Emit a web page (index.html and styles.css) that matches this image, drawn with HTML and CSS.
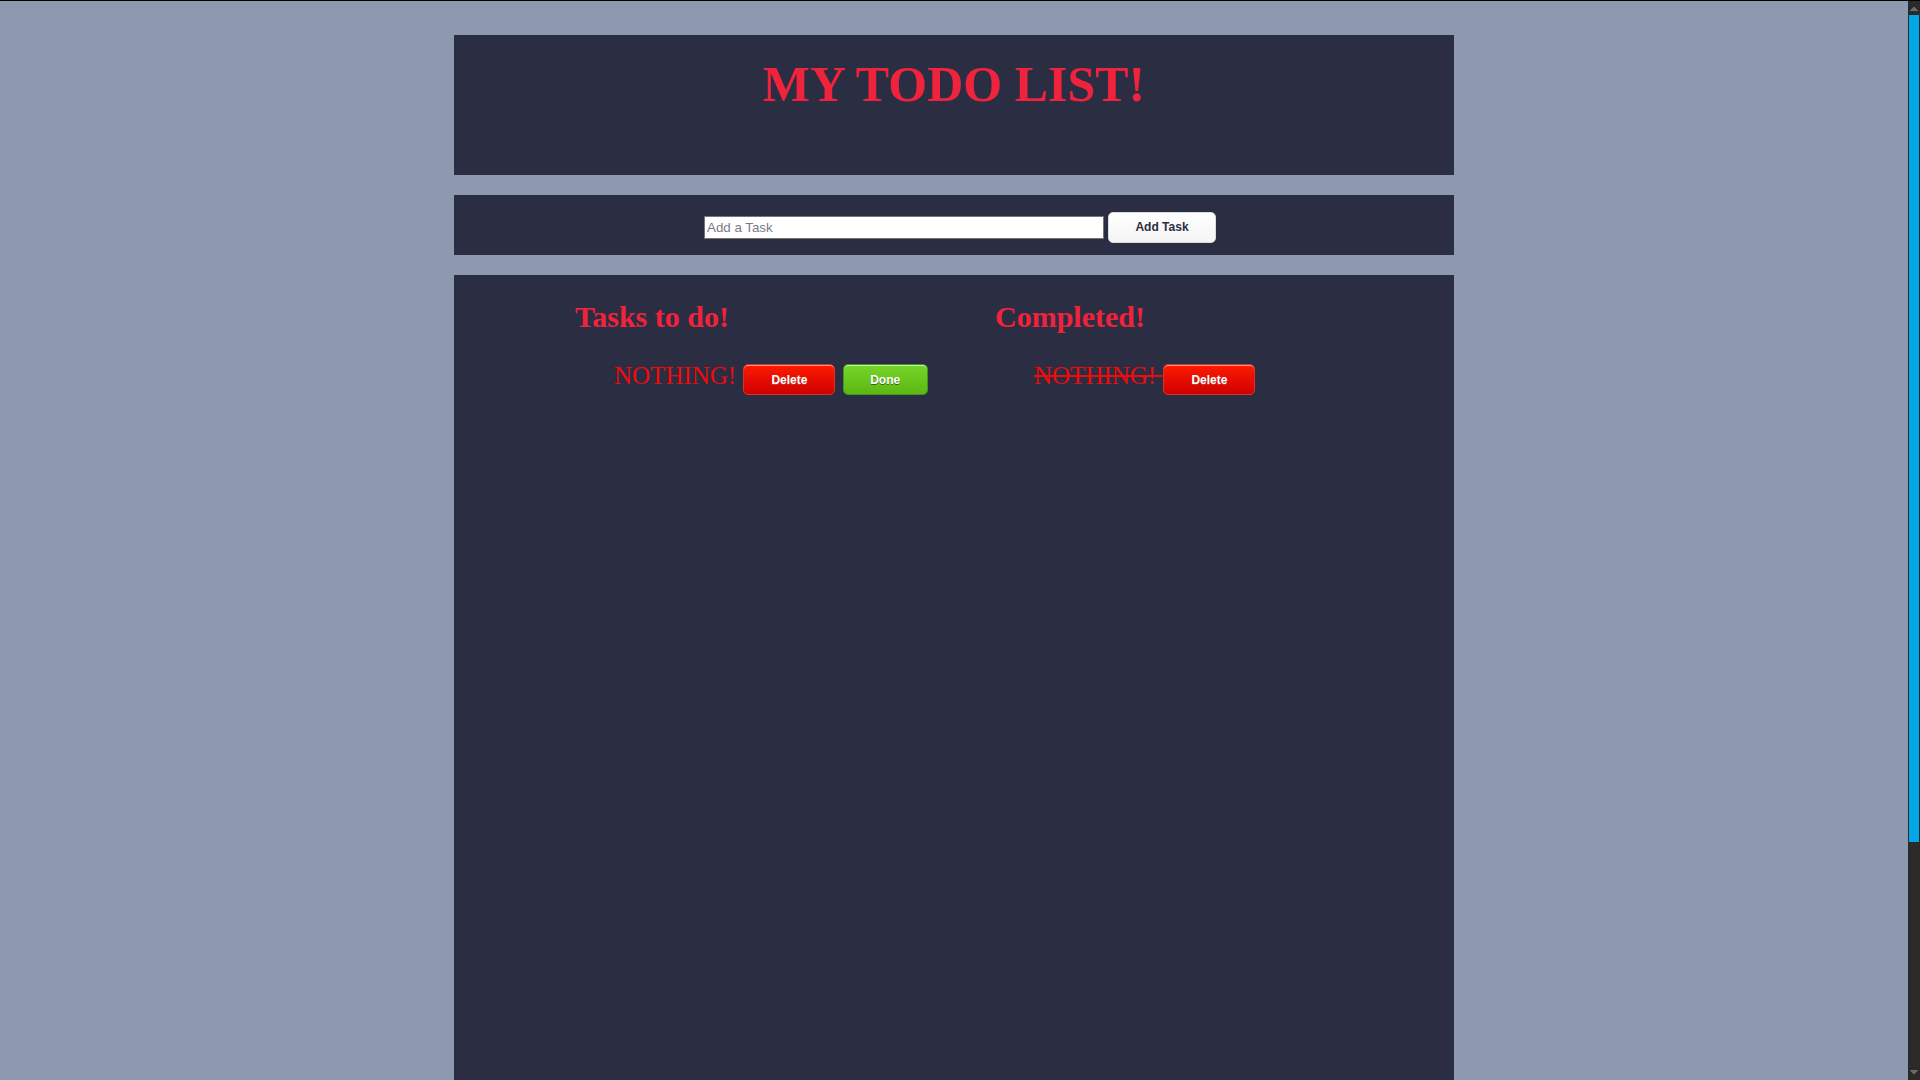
FILE: index.html
```html
<!DOCTYPE html>
<html lang="en">
<head>
<meta charset="utf-8">
<title>My Todo List</title>
<link rel="stylesheet" href="styles.css">
</head>
<body>
<div class="page">
  <header class="panel header">
    <h1 class="title">MY TODO LIST!</h1>
  </header>
  <section class="panel add-bar">
    <input class="task-input" type="text" placeholder="Add a Task">
    <button class="btn btn-white" type="button">Add Task</button>
  </section>
  <main class="panel lists">
    <div class="column">
      <h2 class="col-title">Tasks to do!</h2>
      <ul class="task-list">
        <li class="task">NOTHING! <button class="btn btn-red" type="button">Delete</button> <button class="btn btn-green" type="button">Done</button></li>
      </ul>
    </div>
    <div class="column">
      <h2 class="col-title">Completed!</h2>
      <ul class="task-list">
        <li class="task task-done">NOTHING! <button class="btn btn-red" type="button">Delete</button></li>
      </ul>
    </div>
  </main>
</div>
<div class="scrollbar" aria-hidden="true">
  <span class="sb-arrow sb-up"></span>
  <span class="sb-track"><span class="sb-thumb"></span></span>
  <span class="sb-arrow sb-down"></span>
</div>
</body>
</html>
```
FILE: styles.css
```css
html {
  border-top: 1px solid #000;
  background: #8d99ae;
  scrollbar-width: none;
}
html::-webkit-scrollbar {
  display: none;
}
body {
  margin: 0;
  padding-right: 12px;
  background: #8d99ae;
  font-family: "Liberation Serif", "Times New Roman", serif;
}
.page {
  width: 1000px;
  margin: 0 auto;
  padding: 34px 0 20px;
  display: flex;
  flex-direction: column;
  gap: 20px;
}
.panel {
  background: #2b2d42;
}
.header {
  height: 140px;
  box-sizing: border-box;
  padding-top: 19px;
}
.title {
  margin: 0;
  text-align: center;
  font-size: 50px;
  line-height: 60px;
  font-weight: bold;
  color: #ef233c;
}
.add-bar {
  height: 60px;
  box-sizing: border-box;
  padding: 4px 0 0 12px;
  display: flex;
  align-items: center;
  justify-content: center;
}
.task-input {
  width: 400px;
  height: 23px;
  box-sizing: border-box;
  margin: 0;
  padding: 1px 2px;
  border: 1px solid #767676;
  background: #fff;
  font-family: "Liberation Sans", Arial, sans-serif;
  font-size: 13.33px;
  color: #000;
}
.task-input::placeholder {
  color: #7a7a85;
}
.btn {
  box-sizing: border-box;
  height: 31px;
  margin: 0;
  padding: 0;
  border-radius: 5px;
  font-family: "Liberation Sans", Arial, sans-serif;
  font-size: 12px;
  font-weight: bold;
  line-height: 14px;
  cursor: pointer;
}
.btn-white {
  width: 108px;
  margin-left: 4px;
  background: linear-gradient(#ffffff, #f4f4f4);
  border: 1px solid #dcdcdc;
  box-shadow: inset 0 1px 0 0 #ffffff;
  color: #2b2d42;
  text-shadow: 0 1px 0 #ffffff;
}
.lists {
  height: 1079px;
  box-sizing: border-box;
  padding-left: 121px;
  display: grid;
  grid-template-columns: 420px 420px;
  align-content: start;
}
.col-title {
  margin: 24px 0 0;
  font-size: 30px;
  line-height: 36px;
  font-weight: bold;
  color: #ef233c;
}
.task-list {
  list-style: none;
  margin: 25px 0 0;
  padding: 0 0 0 39px;
}
.task {
  font-size: 25px;
  line-height: 32px;
  color: #f00a0a;
  white-space: nowrap;
}
.task-done {
  text-decoration: line-through;
}
.task .btn {
  display: inline-block;
  vertical-align: baseline;
  padding: 8px 0 7px;
  color: #fff;
}
.btn-red {
  width: 92px;
  margin-left: 1px;
  background: linear-gradient(#fe1a00, #ce0100);
  border: 1px solid #d83526;
  box-shadow: inset 0 1px 0 0 #f29c93;
  text-shadow: 0 1px 0 #b23e35;
}
.btn-green {
  width: 85px;
  margin-left: 1px;
  background: linear-gradient(#77d42a, #5cb811);
  border: 1px solid #3b9a21;
  box-shadow: inset 0 1px 0 0 #caefab;
  text-shadow: 0 1px 0 #2f6627;
}

/* painted window scrollbar, overlaid on the right edge */
.scrollbar {
  position: fixed;
  top: 1px;
  right: 0;
  bottom: 0;
  width: 12px;
  background: #2a2a2a;
  display: flex;
  flex-direction: column;
}
.sb-arrow {
  flex: 0 0 14px;
  background-repeat: no-repeat;
}
.sb-up {
  background-image:
    linear-gradient(to bottom right, transparent 50%, #6a6a6a 50%),
    linear-gradient(to bottom left, transparent 50%, #6a6a6a 50%);
  background-size: 4px 5px, 4px 5px;
  background-position: 2px 5px, 6px 5px;
}
.sb-down {
  background-image:
    linear-gradient(to top right, transparent 50%, #6a6a6a 50%),
    linear-gradient(to top left, transparent 50%, #6a6a6a 50%);
  background-size: 4px 5px, 4px 5px;
  background-position: 2px 4px, 6px 4px;
}
.sb-track {
  flex: 1;
  padding: 0 1px;
  display: flex;
  flex-direction: column;
}
.sb-thumb {
  height: 827px;
  background: #00a8e8;
}
```
